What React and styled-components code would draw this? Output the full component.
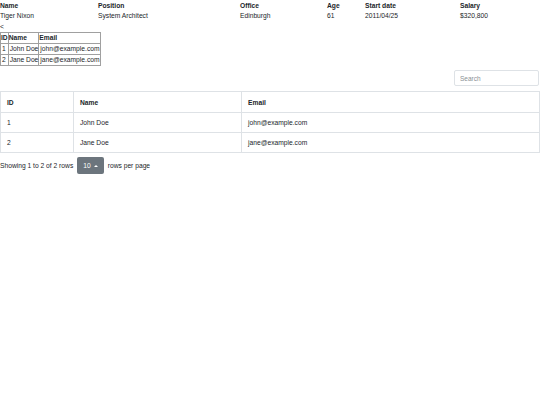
import React from 'react';
import styled, { createGlobalStyle } from 'styled-components';

const GlobalStyle = createGlobalStyle`
  body {
    margin: 0;
    padding-top: 1px;
    font-family: "Liberation Sans", Arial, sans-serif;
    font-size: 6.7px;
    color: #212529;
    background: #fff;
  }
`;

const employees = [
  { name: 'Tiger Nixon', position: 'System Architect', office: 'Edinburgh', age: 61, start: '2011/04/25', salary: '$320,800' },
];

const users = [
  { id: 1, name: 'John Doe', email: 'john@example.com' },
  { id: 2, name: 'Jane Doe', email: 'jane@example.com' },
];

const App = () => (
  <>
    <GlobalStyle />
    <PlainTable>
      <colgroup>
        <col style={{ width: 98 }} />
        <col style={{ width: 142 }} />
        <col style={{ width: 87 }} />
        <col style={{ width: 38 }} />
        <col style={{ width: 95 }} />
        <col />
      </colgroup>
      <thead>
        <tr>
          <PlainTh>Name</PlainTh>
          <PlainTh>Position</PlainTh>
          <PlainTh>Office</PlainTh>
          <PlainTh>Age</PlainTh>
          <PlainTh>Start date</PlainTh>
          <PlainTh>Salary</PlainTh>
        </tr>
      </thead>
      <tbody>
        {employees.map((e) => (
          <tr key={e.name}>
            <PlainTd>{e.name}</PlainTd>
            <PlainTd>{e.position}</PlainTd>
            <PlainTd>{e.office}</PlainTd>
            <PlainTd>{e.age}</PlainTd>
            <PlainTd>{e.start}</PlainTd>
            <PlainTd>{e.salary}</PlainTd>
          </tr>
        ))}
      </tbody>
    </PlainTable>
    <Back>&lt;</Back>
    <MiniTable>
      <thead>
        <tr>
          <MiniTh>ID</MiniTh>
          <MiniTh>Name</MiniTh>
          <MiniTh>Email</MiniTh>
        </tr>
      </thead>
      <tbody>
        {users.map((u) => (
          <tr key={u.id}>
            <MiniTd>{u.id}</MiniTd>
            <MiniTd>{u.name}</MiniTd>
            <MiniTd>{u.email}</MiniTd>
          </tr>
        ))}
      </tbody>
    </MiniTable>

    <Toolbar>
      <SearchInput placeholder="Search" />
    </Toolbar>
    <DataTable>
      <colgroup>
        <col style={{ width: 73 }} />
        <col style={{ width: 168 }} />
        <col />
      </colgroup>
      <thead>
        <tr>
          <DataTh>ID</DataTh>
          <DataTh>Name</DataTh>
          <DataTh>Email</DataTh>
        </tr>
      </thead>
      <tbody>
        {users.map((u) => (
          <tr key={u.id}>
            <DataTd>{u.id}</DataTd>
            <DataTd>{u.name}</DataTd>
            <DataTd>{u.email}</DataTd>
          </tr>
        ))}
      </tbody>
    </DataTable>
    <Pagination>
      <span>Showing 1 to 2 of 2 rows</span>
      <PageSizeButton>
        10 <Caret />
      </PageSizeButton>
      <span>rows per page</span>
    </Pagination>
  </>
);

const PlainTable = styled.table`
  width: 540px;
  border-collapse: collapse;
  table-layout: fixed;
`;

const PlainTh = styled.th`
  text-align: left;
  font-weight: bold;
  padding: 0;
  height: 10px;
  line-height: 10px;
  vertical-align: top;
`;

const PlainTd = styled.td`
  padding: 0;
  height: 10px;
  line-height: 10px;
  vertical-align: top;
`;

const Back = styled.div`
  height: 9px;
  line-height: 9px;
  padding-top: 1px;
`;

const MiniTable = styled.table`
  border-collapse: collapse;
  border: 1px solid #a0a0a0;
  margin-top: 1px;
`;

const MiniTh = styled.th`
  border: 1px solid #a0a0a0;
  text-align: left;
  padding: 0;
  height: 10px;
  line-height: 10px;
`;

const MiniTd = styled.td`
  border: 1px solid #a0a0a0;
  padding: 0 0 0 1px;
  height: 10px;
  line-height: 10px;
`;

const Toolbar = styled.div`
  display: flex;
  justify-content: flex-end;
  padding: 4px 1px 0 0;
`;

const SearchInput = styled.input`
  width: 85px;
  height: 16px;
  box-sizing: border-box;
  border: 1px solid #dee2e6;
  border-radius: 2px;
  padding: 0 5px;
  font-family: inherit;
  font-size: 6.5px;
  color: #495057;
  outline: none;
  &::placeholder {
    color: #8a8f94;
  }
`;

const DataTable = styled.table`
  width: 540px;
  border-collapse: collapse;
  table-layout: fixed;
  margin-top: 5px;
  border: 1px solid #dee2e6;
`;

const DataTh = styled.th`
  text-align: left;
  font-weight: bold;
  height: 20px;
  padding: 0 6px;
  border: 1px solid #dee2e6;
`;

const DataTd = styled.td`
  height: 19px;
  padding: 0 6px;
  border-top: 1px solid #dee2e6;
  border-left: 1px solid #dee2e6;
`;

const Pagination = styled.div`
  display: flex;
  align-items: center;
  gap: 4px;
  margin-top: 4px;
`;

const PageSizeButton = styled.button`
  display: inline-flex;
  align-items: center;
  gap: 3px;
  height: 17px;
  padding: 0 6px;
  border: none;
  border-radius: 2px;
  background: #6c757d;
  color: #fff;
  font-family: inherit;
  font-size: 6.7px;
`;

const Caret = styled.span`
  width: 0;
  height: 0;
  border-left: 2px solid transparent;
  border-right: 2px solid transparent;
  border-bottom: 2px solid #fff;
`;

export default App;
